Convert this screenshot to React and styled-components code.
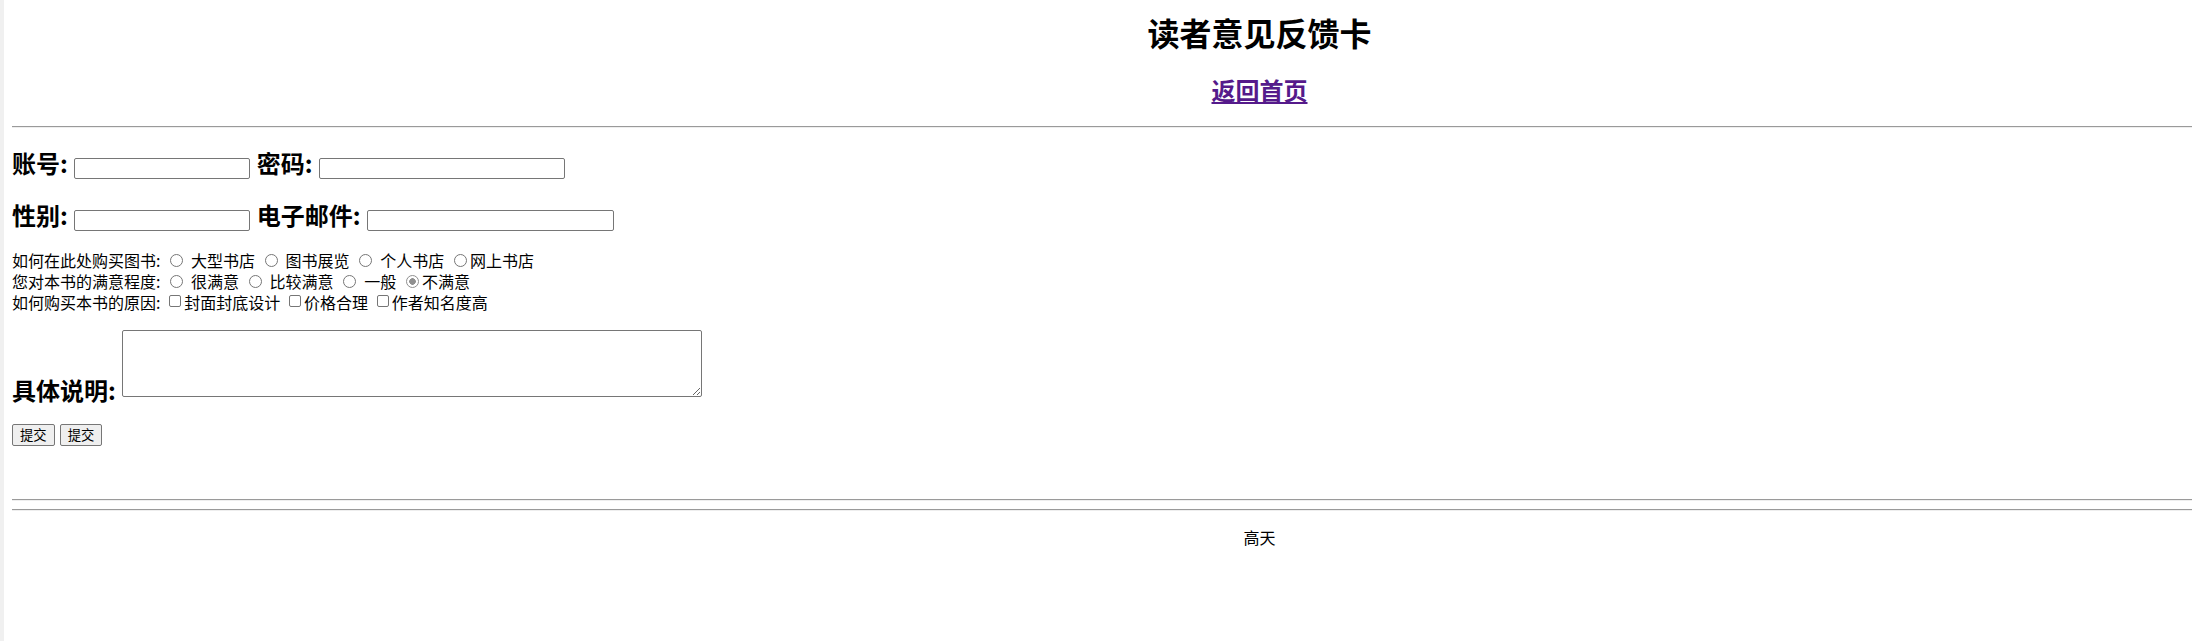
import React from 'react';
import styled, { createGlobalStyle } from 'styled-components';

const GlobalStyle = createGlobalStyle`
  html, body { margin: 0; padding: 0; overflow: hidden; background: #fff; }
  body {
    font-family: "Noto Sans CJK SC", "Microsoft YaHei", sans-serif;
    color: #000;
  }
`;

const Page = styled.div`
  display: flex;
  min-height: 100vh;
`;

const Strip = styled.div`
  flex: none;
  width: 4px;
  background: #f0f0f0;
`;

const Main = styled.main`
  flex: none;
  width: 2495px;
  padding: 0 8px;
  display: flex;
  flex-direction: column;
`;

const Title = styled.h1`
  margin: 11px 0 0;
  font-size: 32px;
  line-height: 42px;
  font-weight: 700;
  text-align: center;
`;

const NavHeading = styled.h2`
  margin: 20.5px 0 0;
  font-size: 24px;
  line-height: 32px;
  font-weight: 700;
  text-align: center;
`;

const NavLink = styled.a`
  color: #551a8b;
  text-decoration: underline;
`;

const Rule = styled.hr`
  margin: ${(p) => p.$top}px 0 0;
  height: 0;
  border: 0;
  border-top: 1px solid #9a9a9a;
  border-bottom: 1px solid #eeeeee;
`;

const Form = styled.form`
  display: flex;
  flex-direction: column;
`;

const FieldRow = styled.div`
  margin-top: ${(p) => p.$top}px;
  font-size: 24px;
  line-height: 32px;
  font-weight: 700;
  word-spacing: 1px;
  white-space: nowrap;
`;

const TextInput = styled.input`
  width: ${(p) => p.$w}px;
  height: 21px;
  box-sizing: border-box;
  margin: 0;
  padding: 1px 2px;
  border: 1px solid #767676;
  border-radius: 2px;
  background: #fff;
  font: 400 13.333px "Liberation Sans", Arial, sans-serif;
  vertical-align: baseline;
`;

const ChoiceBlock = styled.div`
  margin-top: 19px;
  font-size: 16px;
  line-height: 21px;
  word-spacing: 1.2px;
  white-space: nowrap;
`;

const ChoiceLine = styled.div``;

const Radio = styled.input.attrs({ type: 'radio' })`
  appearance: none;
  box-sizing: border-box;
  width: 13px;
  height: 13px;
  margin: 3px 3px 0 5px;
  border: 1px solid #767676;
  border-radius: 50%;
  background: #fff;
  vertical-align: baseline;
  &:checked {
    border-color: #8f8f8f;
    background: radial-gradient(circle, #8f8f8f 0 3px, #fff 3.6px);
  }
`;

const Checkbox = styled.input.attrs({ type: 'checkbox' })`
  appearance: none;
  box-sizing: border-box;
  width: 12px;
  height: 12px;
  margin: 3px 3px 2px 4px;
  border: 1px solid #767676;
  border-radius: 2px;
  background: #fff;
  vertical-align: baseline;
`;

const TextArea = styled.textarea`
  width: 580px;
  height: 67px;
  box-sizing: border-box;
  margin: 0 0 3px;
  padding: 2px;
  border: 1px solid #767676;
  border-radius: 2px;
  font: 400 13.333px "Liberation Mono", monospace;
  vertical-align: baseline;
`;

const ButtonRow = styled.div`
  margin-top: 17.5px;
  display: flex;
  gap: 5px;
`;

const Button = styled.button`
  margin: 0;
  padding: 2px 7px;
  border: 1px solid #767676;
  border-radius: 2px;
  background: #efefef;
  color: #000;
  font: 400 13.333px "Noto Sans CJK SC", sans-serif;
  line-height: 16px;
`;

const Footer = styled.p`
  margin: 16.5px 0 0;
  font-size: 16px;
  line-height: 21px;
  text-align: center;
`;

export default function App() {
  return (
    <>
      <GlobalStyle />
      <Page>
        <Strip />
        <Main>
          <Title>读者意见反馈卡</Title>
          <NavHeading>
            <NavLink href="#">返回首页</NavLink>
          </NavHeading>
          <Rule $top={20.5} />
          <Form onSubmit={(e) => e.preventDefault()}>
            <FieldRow $top={18.5}>
              账号: <TextInput type="text" $w={176} /> 密码: <TextInput type="password" $w={246} />
            </FieldRow>
            <FieldRow $top={20}>
              性别: <TextInput type="text" $w={176} /> 电子邮件: <TextInput type="text" $w={247} />
            </FieldRow>
            <ChoiceBlock>
              <ChoiceLine>
                如何在此处购买图书: <Radio name="where" /> 大型书店 <Radio name="where" /> 图书展览 <Radio name="where" /> 个人书店 <Radio name="where" />网上书店
              </ChoiceLine>
              <ChoiceLine>
                您对本书的满意程度: <Radio name="level" /> 很满意 <Radio name="level" /> 比较满意 <Radio name="level" /> 一般 <Radio name="level" defaultChecked />不满意
              </ChoiceLine>
              <ChoiceLine>
                如何购买本书的原因: <Checkbox />封面封底设计 <Checkbox />价格合理 <Checkbox />作者知名度高
              </ChoiceLine>
            </ChoiceBlock>
            <FieldRow $top={17.5}>
              具体说明: <TextArea />
            </FieldRow>
            <ButtonRow>
              <Button type="submit">提交</Button>
              <Button type="button">提交</Button>
            </ButtonRow>
          </Form>
          <Rule $top={53} />
          <Rule $top={8} />
          <Footer>高天</Footer>
        </Main>
      </Page>
    </>
  );
}
